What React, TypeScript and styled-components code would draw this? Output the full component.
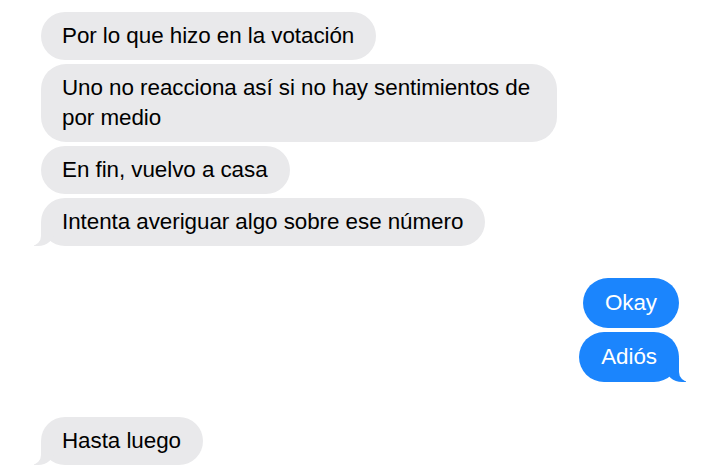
import { createGlobalStyle, styled, css } from 'styled-components';

interface IMessage {
  id: number;
  text: string;
  fromMe: boolean;
  tail?: boolean;
  gapBefore?: boolean;
}

const messages: IMessage[] = [
  { id: 1, text: 'Por lo que hizo en la votación', fromMe: false },
  { id: 2, text: 'Uno no reacciona así si no hay sentimientos de por medio', fromMe: false },
  { id: 3, text: 'En fin, vuelvo a casa', fromMe: false },
  { id: 4, text: 'Intenta averiguar algo sobre ese número', fromMe: false, tail: true },
  { id: 5, text: 'Okay', fromMe: true, gapBefore: true },
  { id: 6, text: 'Adiós', fromMe: true, tail: true },
  { id: 7, text: 'Hasta luego', fromMe: false, tail: true, gapBefore: true },
];

export default function App() {
  return (
    <>
      <GlobalStyle />
      <Style.Thread>
        {messages.map((m) => (
          <Style.Bubble key={m.id} $fromMe={m.fromMe} $tail={Boolean(m.tail)} $gap={Boolean(m.gapBefore)}>
            {m.text}
          </Style.Bubble>
        ))}
      </Style.Thread>
    </>
  );
}

const GlobalStyle = createGlobalStyle`
  body {
    margin: 0;
    background: #ffffff;
    font-family: "Liberation Sans", Arial, sans-serif;
  }
`;

const GRAY = '#e9e9eb';
const BLUE = '#1b85fd';

const Style = {
  Thread: styled.div`
    display: flex;
    flex-direction: column;
    gap: 4px;
    width: 720px;
    height: 475px;
    box-sizing: border-box;
    padding: 12px 41px 0 41px;
    overflow: hidden;
  `,

  Bubble: styled.div<{ $fromMe: boolean; $tail: boolean; $gap: boolean }>`
    position: relative;
    box-sizing: border-box;
    max-width: 516px;
    padding: ${(p) => (p.$fromMe ? '10px 22px' : '9px 22px 9px 21px')};
    border-radius: 25px;
    font-size: 22.4px;
    line-height: 30px;
    letter-spacing: -0.05px;
    align-self: ${(p) => (p.$fromMe ? 'flex-end' : 'flex-start')};
    background: ${(p) => (p.$fromMe ? BLUE : GRAY)};
    color: ${(p) => (p.$fromMe ? '#ffffff' : '#000000')};
    margin-top: ${(p) => (p.$gap ? (p.$fromMe ? '28px' : '31px') : '0')};

    ${(p) =>
      p.$tail &&
      css`
        &::before,
        &::after {
          content: '';
          position: absolute;
          bottom: 0;
          height: 24px;
        }

        &::before {
          ${p.$fromMe ? 'right: -7px;' : 'left: -7px;'}
          width: 20px;
          background: ${p.$fromMe ? BLUE : GRAY};
          ${p.$fromMe
            ? 'border-bottom-left-radius: 16px 14px;'
            : 'border-bottom-right-radius: 16px 14px;'}
        }

        &::after {
          ${p.$fromMe ? 'right: -26px;' : 'left: -26px;'}
          width: 26px;
          background: #ffffff;
          ${p.$fromMe ? 'border-bottom-left-radius: 10px;' : 'border-bottom-right-radius: 10px;'}
        }
      `}
  `,
};
